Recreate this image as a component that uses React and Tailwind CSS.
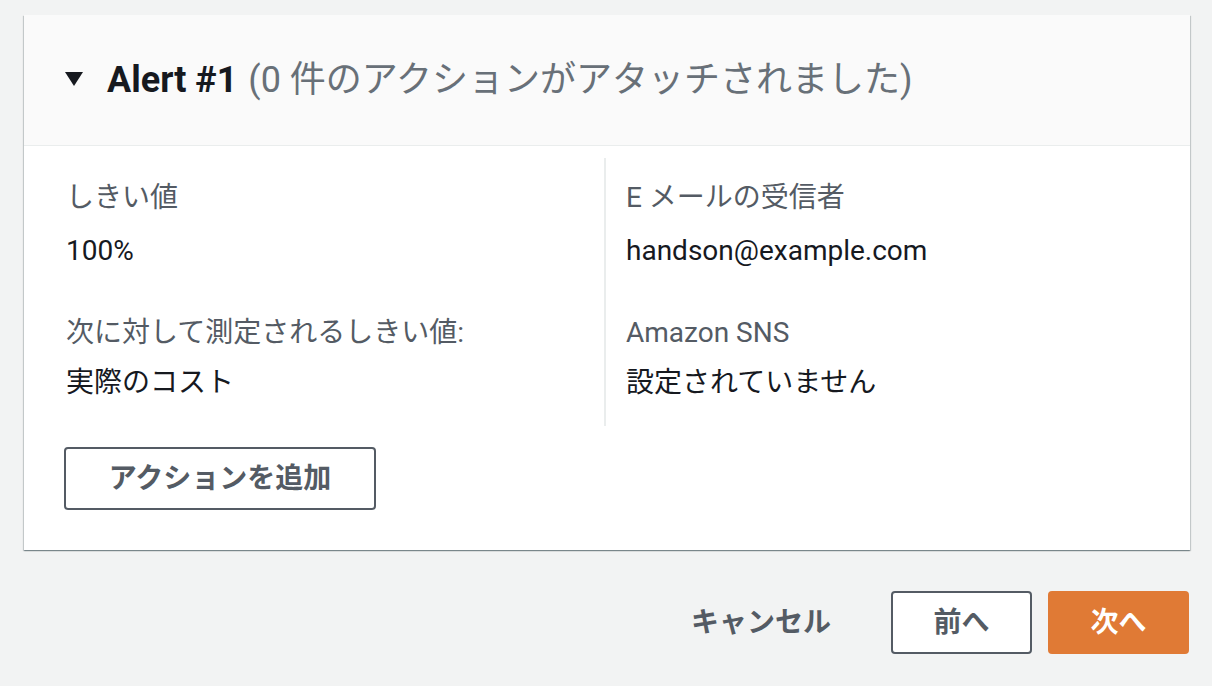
export default function App() {
  const font = { fontFamily: 'Roboto, "Noto Sans CJK JP", sans-serif' };
  return (
    <div className="w-[1212px] h-[686px] bg-[#f2f3f3] pt-[15px] px-[23px] overflow-hidden" style={font}>
      <div className="bg-white w-[1166px] ml-[1px] shadow-[0_1px_1px_0_rgba(0,28,36,0.3),1px_1px_1px_0_rgba(0,28,36,0.15),-1px_1px_1px_0_rgba(0,28,36,0.15)]">
        <div className="h-[131px] bg-[#fafafa] border-b border-[#eaeded] flex items-center pl-[41px]">
          <svg width="18" height="16" viewBox="0 0 18 16" className="mr-[24px] mt-[-2px]">
            <path d="M0 1 L18 1 L9 15 Z" fill="#16191f" />
          </svg>
          <span className="text-[36px] font-bold text-[#16191f]">Alert #1</span>
          <span className="text-[36px] text-[#687078] ml-[11px]">(0 件のアクションがアタッチされました)</span>
        </div>
        <div className="pt-[12px] pb-[40px]">
          <div className="grid grid-cols-[582px_1fr]">
            <div className="pl-[42px] border-r-2 border-[#eaeded] pt-[18px] pb-[21px]">
              <div className="text-[28px] text-[#545b64] h-[44px] leading-[44px]">しきい値</div>
              <div className="text-[28px] text-[#16191f] h-[44px] leading-[44px] mt-[9px]">100%</div>
              <div className="text-[28px] text-[#545b64] h-[44px] leading-[44px] mt-[38px]">次に対して測定されるしきい値:</div>
              <div className="text-[28px] text-[#16191f] h-[44px] leading-[44px] mt-[6px]">実際のコスト</div>
            </div>
            <div className="pl-[20px] pt-[18px]">
              <div className="text-[28px] text-[#545b64] h-[44px] leading-[44px]">E メールの受信者</div>
              <div className="text-[28px] text-[#16191f] h-[44px] leading-[44px] mt-[9px]">handson@example.com</div>
              <div className="text-[28px] text-[#545b64] h-[44px] leading-[44px] mt-[38px]">Amazon SNS</div>
              <div className="text-[28px] text-[#16191f] h-[44px] leading-[44px] mt-[6px]">設定されていません</div>
            </div>
          </div>
          <div className="pl-[40px] mt-[21px]">
            <button className="w-[312px] h-[63px] border-2 border-[#545b64] rounded-[4px] bg-white text-[28px] font-bold text-[#545b64]">
              アクションを追加
            </button>
          </div>
        </div>
      </div>
      <div className="flex justify-end items-center mt-[41px] w-[1166px]">
        <span className="text-[28px] font-bold text-[#545b64] mr-[60px]">キャンセル</span>
        <button className="w-[141px] h-[63px] border-2 border-[#545b64] rounded-[4px] bg-white text-[28px] font-bold text-[#545b64] mr-[16px]">
          前へ
        </button>
        <button className="w-[141px] h-[63px] rounded-[4px] bg-[#e07a35] text-[28px] font-bold text-white">
          次へ
        </button>
      </div>
    </div>
  );
}
